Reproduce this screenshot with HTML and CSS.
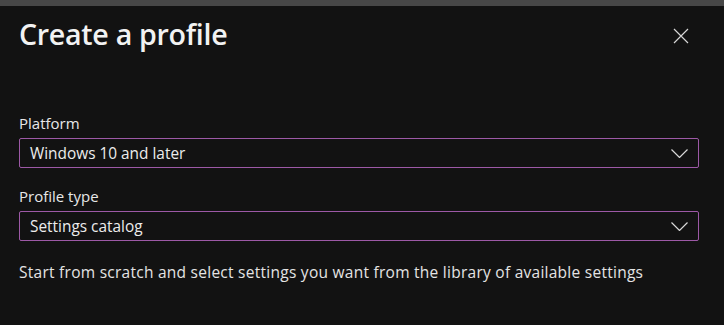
FILE: index.html
```html
<!DOCTYPE html>
<html>
<head>
<meta charset="utf-8">
<link rel="stylesheet" href="styles.css">
</head>
<body>
<div class="topbar"></div>
<div class="panel">
  <div class="header">
    <h1 class="title">Create a profile</h1>
    <button class="close" aria-label="Close">
      <svg width="16" height="16" viewBox="0 0 16 16"><path d="M1 1 L15 15 M15 1 L1 15" stroke="#d6d6d6" stroke-width="1.2" fill="none"/></svg>
    </button>
  </div>
  <div class="field field-first">
    <label class="label">Platform</label>
    <div class="select">
      <span class="value">Windows 10 and later</span>
      <svg class="chev" width="17" height="9" viewBox="0 0 17 9"><path d="M0.5 0.5 L8.5 8.5 L16.5 0.5" stroke="#d8d8d8" stroke-width="1.2" fill="none"/></svg>
    </div>
  </div>
  <div class="field">
    <label class="label">Profile type</label>
    <div class="select">
      <span class="value">Settings catalog</span>
      <svg class="chev" width="17" height="9" viewBox="0 0 17 9"><path d="M0.5 0.5 L8.5 8.5 L16.5 0.5" stroke="#d8d8d8" stroke-width="1.2" fill="none"/></svg>
    </div>
  </div>
  <p class="desc">Start from scratch and select settings you want from the library of available settings</p>
</div>
</body>
</html>
```
FILE: styles.css
```css
html, body {
  margin: 0;
  padding: 0;
  background: #121212;
  height: 100%;
}
body {
  font-family: "Open Sans", "Noto Sans", "Liberation Sans", sans-serif;
  color: #e6e6e6;
}
.topbar {
  height: 6px;
  background: #474747;
}
.panel {
  padding: 0 25px 0 19px;
}
.header {
  display: flex;
  justify-content: space-between;
  align-items: flex-start;
  height: 50px;
}
.title {
  margin: 10px 0 0 0;
  font-size: 28.6px;
  font-weight: 600;
  line-height: 36px;
  color: #f2f2f2;
  letter-spacing: -0.3px;
}
.close {
  margin: 22px 10px 0 0;
  padding: 0;
  background: none;
  border: none;
  width: 16px;
  height: 16px;
  display: flex;
}
.field {
  display: flex;
  flex-direction: column;
  margin-top: 18px;
}
.field-first {
  margin-top: 57px;
}
.label {
  font-size: 15px;
  line-height: 20px;
  margin-bottom: 5px;
  color: #e8e8e8;
}
.select {
  box-sizing: border-box;
  height: 30px;
  border: 1px solid #9d59a6;
  border-radius: 2px;
  display: flex;
  align-items: center;
  justify-content: space-between;
  padding: 0 10px 0 10px;
}
.value {
  font-size: 15.4px;
  color: #ececec;
}
.desc {
  margin: 21px 0 0 0;
  font-size: 15.5px;
  letter-spacing: 0.26px;
  line-height: 20px;
  color: #e4e4e4;
}
```
